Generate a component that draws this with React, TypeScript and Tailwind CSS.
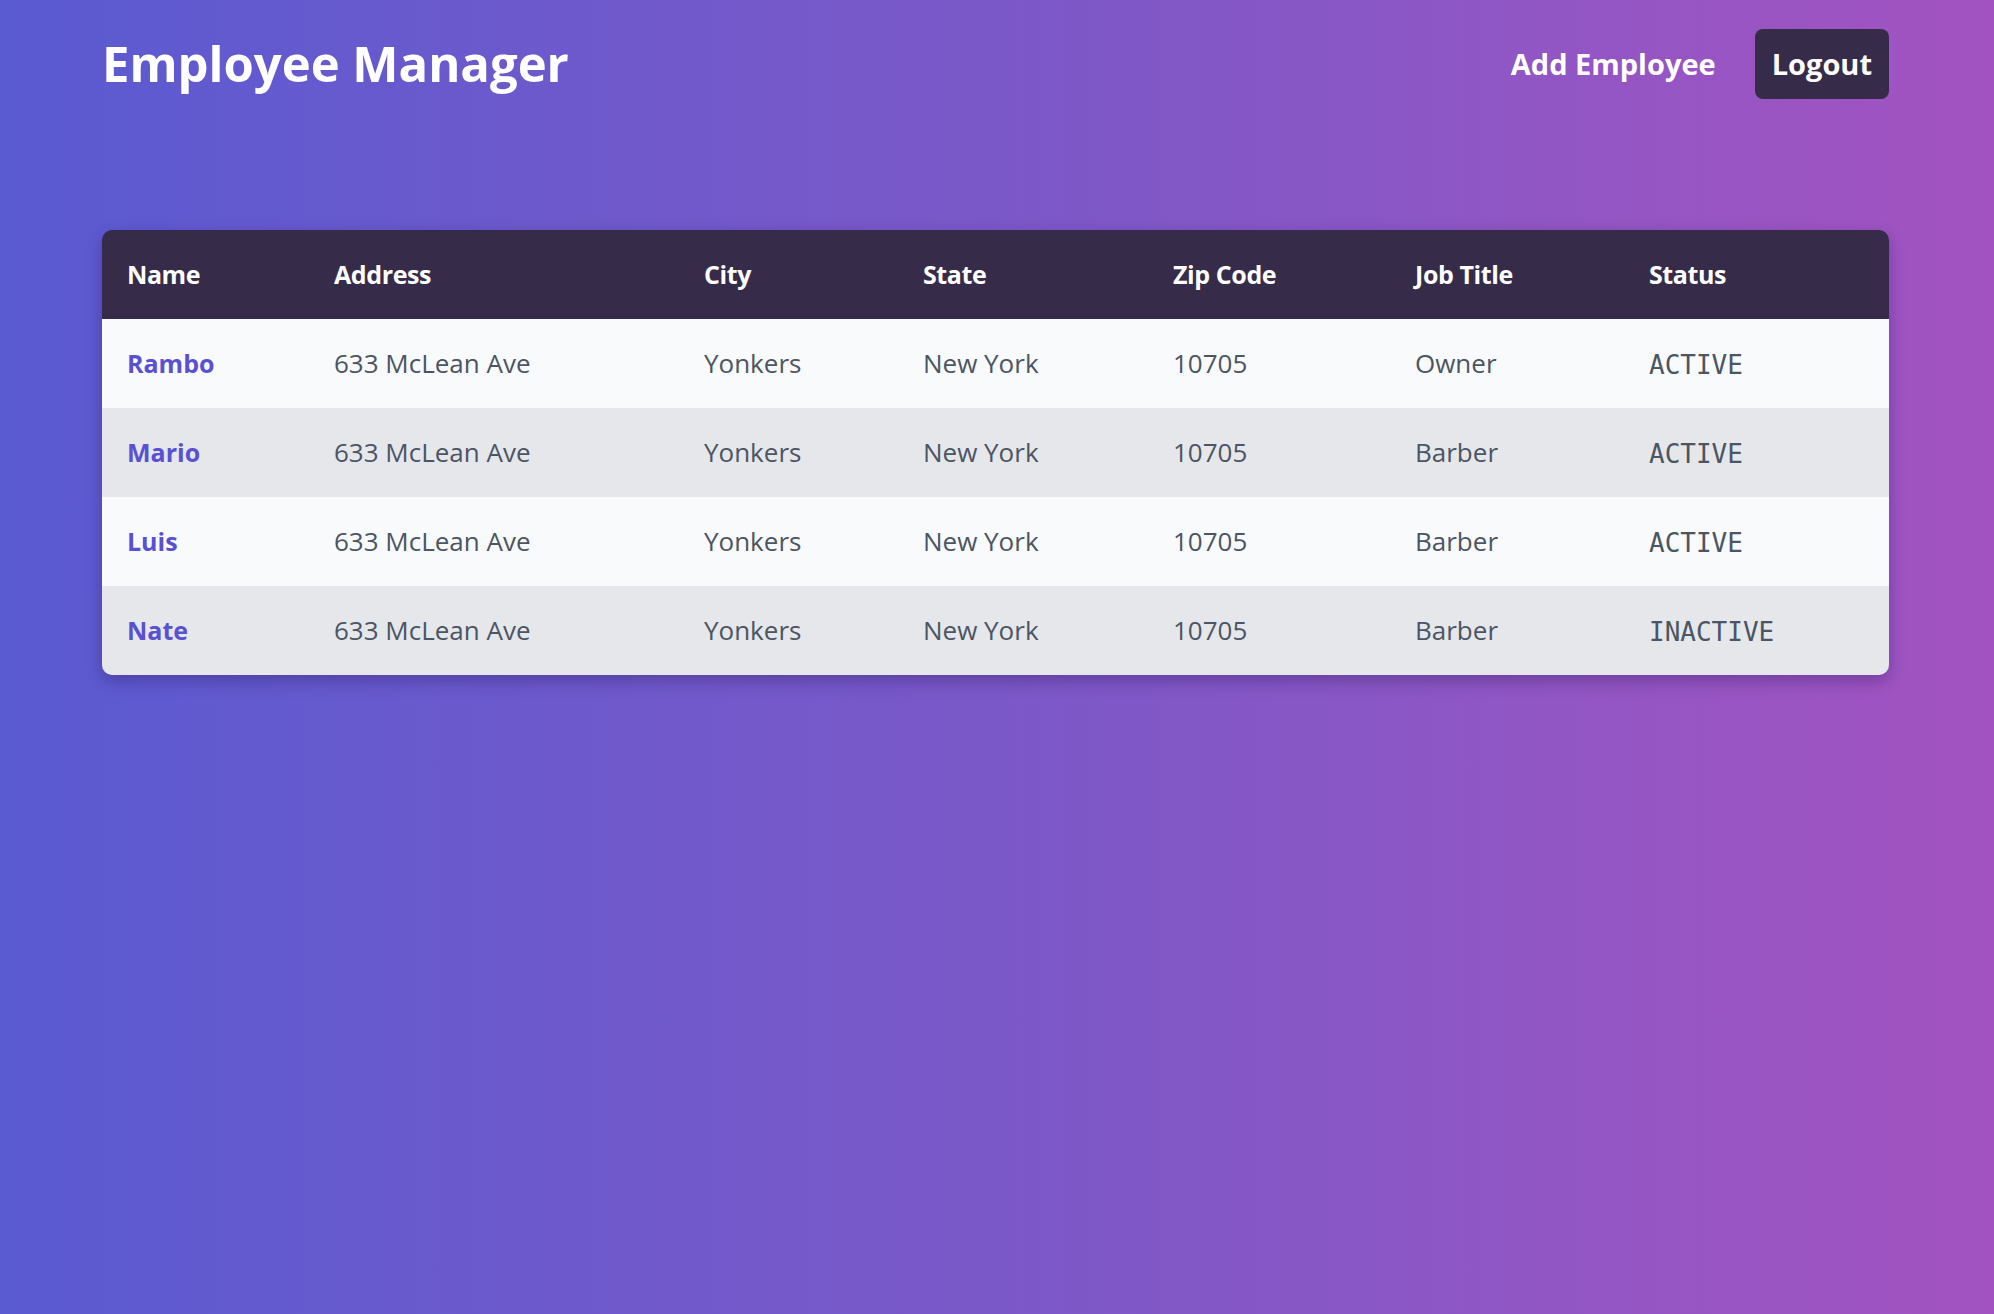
const employees = [
  { name: "Rambo", title: "Owner", status: "ACTIVE" },
  { name: "Mario", title: "Barber", status: "ACTIVE" },
  { name: "Luis", title: "Barber", status: "ACTIVE" },
  { name: "Nate", title: "Barber", status: "INACTIVE" },
];

const columns = [
  { label: "Name", w: "w-[207px]" },
  { label: "Address", w: "w-[370px]" },
  { label: "City", w: "w-[219px]" },
  { label: "State", w: "w-[250px]" },
  { label: "Zip Code", w: "w-[242px]" },
  { label: "Job Title", w: "w-[234px]" },
  { label: "Status", w: "" },
];

export default function App() {
  return (
    <div className="min-h-screen w-full bg-linear-to-r from-[#5a5ad1] via-[#7b58c8] to-[#a253c1] font-['Open_Sans',sans-serif] pl-[102px] pr-[105px]">
      <header className="flex items-center justify-between pt-[29px] h-[99px]">
        <h1 className="text-[49px] font-bold text-white">
          Employee Manager
        </h1>
        <nav className="flex items-center gap-[39px]">
          <a className="text-[29px] font-bold text-white cursor-pointer">
            Add Employee
          </a>
          <button className="h-[70px] px-[17px] rounded-lg bg-[#362c4a] text-[29px] font-bold text-white">
            Logout
          </button>
        </nav>
      </header>

      <div className="mt-[131px] rounded-[10px] overflow-hidden shadow-[0_6px_16px_rgba(40,20,90,0.35)]">
        <table className="w-full table-fixed border-collapse text-left">
          <thead>
            <tr className="h-[89px] bg-[#362c4a]">
              {columns.map((c) => (
                <th
                  key={c.label}
                  className={`${c.w} px-[25px] text-[25px] font-bold text-white tracking-[-0.4px]`}
                >
                  {c.label}
                </th>
              ))}
            </tr>
          </thead>
          <tbody className="text-[26px] text-[#4b5563]">
            {employees.map((e, i) => (
              <tr
                key={e.name}
                className={`h-[89px] ${i % 2 === 0 ? "bg-[#f9fafb]" : "bg-[#e5e7eb]"}`}
              >
                <td className="px-[25px] font-bold text-[#5a50d2] text-[25px]">{e.name}</td>
                <td className="px-[25px]">633 McLean Ave</td>
                <td className="px-[25px]">Yonkers</td>
                <td className="px-[25px]">New York</td>
                <td className="px-[25px]">10705</td>
                <td className="px-[25px]">{e.title}</td>
                <td className="px-[25px] font-['DejaVu_Sans_Mono',monospace] text-[26px] pt-[3px]">
                  {e.status}
                </td>
              </tr>
            ))}
          </tbody>
        </table>
      </div>
    </div>
  );
}
